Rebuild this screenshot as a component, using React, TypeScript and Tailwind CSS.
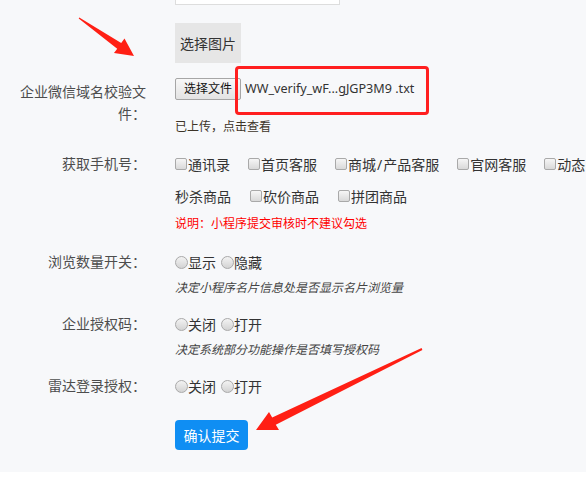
const Checkbox = ({ label }: { label: React.ReactNode }) => (
    <span className="flex items-center">
        <span className="w-[12px] h-[12px] rounded-[2px] border border-[#a9a9a9] bg-gradient-to-b from-[#f6f6f6] to-[#d9d9d9] mr-[1px]" />
        <span>{label}</span>
    </span>
);

const Radio = ({ label }: { label: string }) => (
    <span className="flex items-center">
        <span className="w-[13px] h-[13px] rounded-full border border-[#a9a9a9] bg-gradient-to-b from-[#f3f3f3] to-[#d3d3d3]" />
        <span>{label}</span>
    </span>
);

const Label = ({ children, className = '' }: { children: React.ReactNode; className?: string }) => (
    <div className={`w-[130px] ml-[16px] shrink-0 text-right text-[14px] text-[#4d4d4d] ${className}`}>{children}</div>
);

const RadioRow = ({ label, options, hint }: { label: string; options: string[]; hint?: string }) => (
    <div className="flex mt-[10px]">
        <Label className="h-[32px] leading-[32px]">{label}</Label>
        <div className="ml-[29px] flex flex-col">
            <div className="h-[32px] flex items-center gap-[5px] text-[14px] text-[#333]">
                {options.map((o) => (
                    <Radio key={o} label={o} />
                ))}
            </div>
            {hint && <div className="h-[20px] leading-[20px] text-[12px] italic text-[#444]">{hint}</div>}
        </div>
    </div>
);

export default function App() {
    return (
        <div className="relative w-[586px] h-[484px] overflow-hidden bg-white font-['Noto_Sans','Noto_Sans_CJK_SC',sans-serif]">
            <div className="h-[473px] bg-[#f7f8fa]">
                {/* image picker */}
                <div className="pl-[175px]">
                    <div className="w-[165px] h-[6px] -mt-px border border-[#dddddd] bg-white" />
                    <div className="mt-[18px] w-[66px] h-[40px] bg-[#e6e6e6] flex items-center justify-center text-[14px] text-[#333]">
                        选择图片
                    </div>
                </div>

                {/* verify file */}
                <div className="flex mt-[15px]">
                    <Label className="mt-[3px] leading-[22px]">企业微信域名校验文件：</Label>
                    <div className="ml-[29px] flex flex-col">
                        <div className="relative flex items-center h-[22px]">
                            <button className="h-[22px] px-[8px] border border-[#a6a6a6] rounded-[2px] bg-gradient-to-b from-[#f8f8f8] to-[#e3e3e3] text-[12px] text-[#111]">
                                选择文件
                            </button>
                            <span className="ml-[4px] text-[12.6px] text-[#333] whitespace-nowrap">WW_verify_wF...gJGP3M9 .txt</span>
                            <div className="absolute left-[60px] top-[-12px] w-[194px] h-[49px] border-[3px] border-[#ff1f1f] rounded-[4px]" />
                        </div>
                        <div className="mt-[17px] h-[20px] leading-[20px] text-[12px] text-[#3d3428]">已上传，点击查看</div>
                    </div>
                </div>

                {/* phone */}
                <div className="flex mt-[11px]">
                    <Label className="h-[32px] leading-[32px]">获取手机号：</Label>
                    <div className="ml-[29px] flex flex-col text-[14px] text-[#333] whitespace-nowrap">
                        <div className="h-[32px] flex items-center gap-[18px]">
                            <Checkbox label="通讯录" />
                            <Checkbox label="首页客服" />
                            <Checkbox label={<>商城<span className="px-[1px]">/</span>产品客服</>} />
                            <Checkbox label="官网客服" />
                            <Checkbox label="动态" />
                        </div>
                        <div className="h-[32px] flex items-center gap-[19px]">
                            <span>秒杀商品</span>
                            <Checkbox label="砍价商品" />
                            <Checkbox label="拼团商品" />
                        </div>
                        <div className="h-[24px] leading-[24px] text-[12px] text-[#ff0000]">说明：小程序提交审核时不建议勾选</div>
                    </div>
                </div>

                <RadioRow label="浏览数量开关：" options={['显示', '隐藏']} hint="决定小程序名片信息处是否显示名片浏览量" />
                <RadioRow label="企业授权码：" options={['关闭', '打开']} hint="决定系统部分功能操作是否填写授权码" />
                <RadioRow label="雷达登录授权：" options={['关闭', '打开']} />

                <div className="pl-[175px] mt-[18px]">
                    <button className="w-[73px] h-[30px] rounded-[4px] bg-[#0f8ef3] text-white text-[14px]">确认提交</button>
                </div>
            </div>

            {/* annotation arrows */}
            <svg className="absolute inset-0 pointer-events-none" width="586" height="484" viewBox="0 0 586 484">
                <polygon
                    fill="#ff1f14"
                    points="79.3,17.6 121.2,42.9 124.5,38.5 134,56 114,53 117.2,48.7 78.7,18.4"
                />
                <polygon
                    fill="#ff1f14"
                    points="421.6,348.1 272.2,417.6 269,412 256,430 279,430 275.8,424.8 422.4,349.9"
                />
            </svg>
        </div>
    );
}
